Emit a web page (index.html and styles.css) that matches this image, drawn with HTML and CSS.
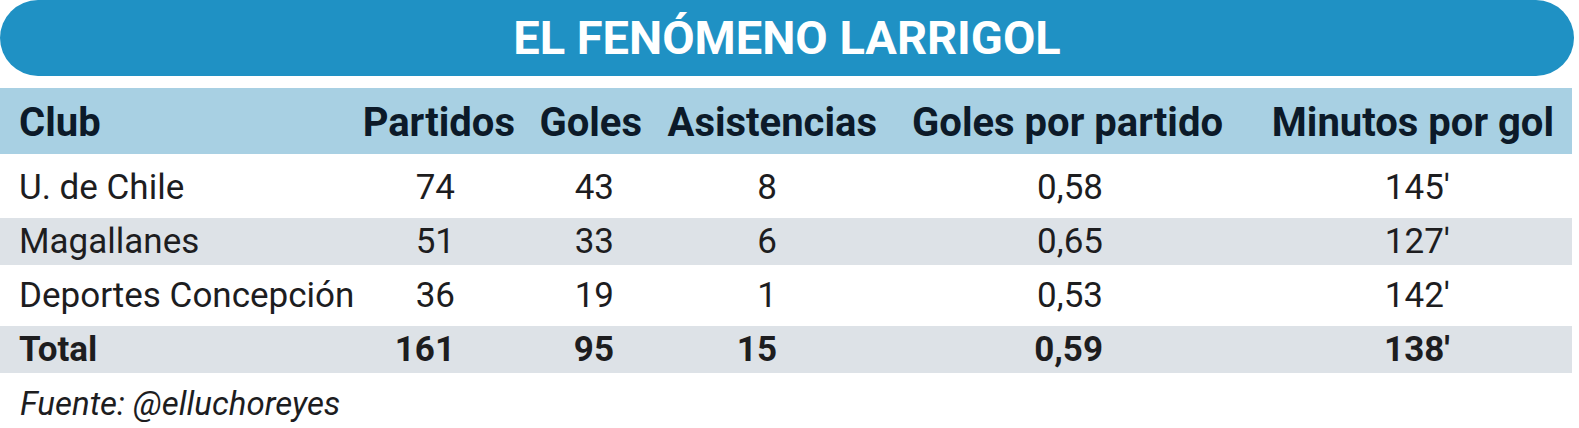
FILE: index.html
```html
<!DOCTYPE html>
<html lang="es">
<head>
<meta charset="utf-8">
<title>El fenómeno Larrigol</title>
<link rel="stylesheet" href="styles.css">
</head>
<body>
<div class="graphic">
  <div class="title">EL FENÓMENO LARRIGOL</div>
  <div class="table">
    <div class="row head">
      <div class="cell club">Club</div>
      <div class="cell">Partidos</div>
      <div class="cell">Goles</div>
      <div class="cell">Asistencias</div>
      <div class="cell">Goles por partido</div>
      <div class="cell">Minutos por gol</div>
    </div>
    <div class="row body">
      <div class="cell club">U. de Chile</div>
      <div class="cell num c2">74</div>
      <div class="cell num c3">43</div>
      <div class="cell num c4">8</div>
      <div class="cell num c5">0,58</div>
      <div class="cell num c6">145'</div>
    </div>
    <div class="row body alt">
      <div class="cell club">Magallanes</div>
      <div class="cell num c2">51</div>
      <div class="cell num c3">33</div>
      <div class="cell num c4">6</div>
      <div class="cell num c5">0,65</div>
      <div class="cell num c6">127'</div>
    </div>
    <div class="row body">
      <div class="cell club">Deportes Concepción</div>
      <div class="cell num c2">36</div>
      <div class="cell num c3">19</div>
      <div class="cell num c4">1</div>
      <div class="cell num c5">0,53</div>
      <div class="cell num c6">142'</div>
    </div>
    <div class="row body alt total">
      <div class="cell club">Total</div>
      <div class="cell num c2">161</div>
      <div class="cell num c3">95</div>
      <div class="cell num c4">15</div>
      <div class="cell num c5">0,59</div>
      <div class="cell num c6">138'</div>
    </div>
  </div>
  <div class="source">Fuente: @elluchoreyes</div>
</div>
</body>
</html>
```

FILE: styles.css
```css
html, body {
  margin: 0;
  padding: 0;
  background: #ffffff;
}

body {
  width: 1579px;
  height: 428px;
  overflow: hidden;
  font-family: Roboto, "Liberation Sans", sans-serif;
}

.graphic {
  display: flex;
  flex-direction: column;
}

.title {
  width: 1574px;
  height: 76px;
  border-radius: 38px;
  background: #1f91c4;
  color: #ffffff;
  font-size: 47px;
  font-weight: 700;
  line-height: 76px;
  text-align: center;
  margin-bottom: 12px;
  white-space: nowrap;
}

.table {
  width: 1572px;
  display: flex;
  flex-direction: column;
}

.row {
  display: grid;
  grid-template-columns: 348px 167px 127px 235px 346px 331px 1fr;
  white-space: nowrap;
}

.head {
  box-sizing: border-box;
  height: 66px;
  padding-top: 3px;
  line-height: 63px;
  background: #a8d0e3;
  color: #0c1a29;
  font-size: 40px;
  font-weight: 700;
  margin-bottom: 7px;
}

.head .cell {
  text-align: right;
}

.cell.club {
  text-align: left;
  padding-left: 19px;
}

.body {
  height: 47px;
  margin: 3px 0 4px;
  line-height: 47px;
  font-size: 35px;
  font-weight: 400;
  color: #1d1d1f;
}

.alt {
  background: #dde2e7;
}

.total {
  font-weight: 700;
}

.num {
  text-align: right;
}

.c2 { padding-right: 60px; }
.c3 { padding-right: 28px; }
.c4 { padding-right: 100px; }
.c5 { padding-right: 120px; }
.c6 { padding-right: 104px; }

.source {
  padding-left: 20px;
  margin-top: 2px;
  font-size: 33px;
  font-style: italic;
  line-height: 50px;
  color: #1d1d1f;
}
```
